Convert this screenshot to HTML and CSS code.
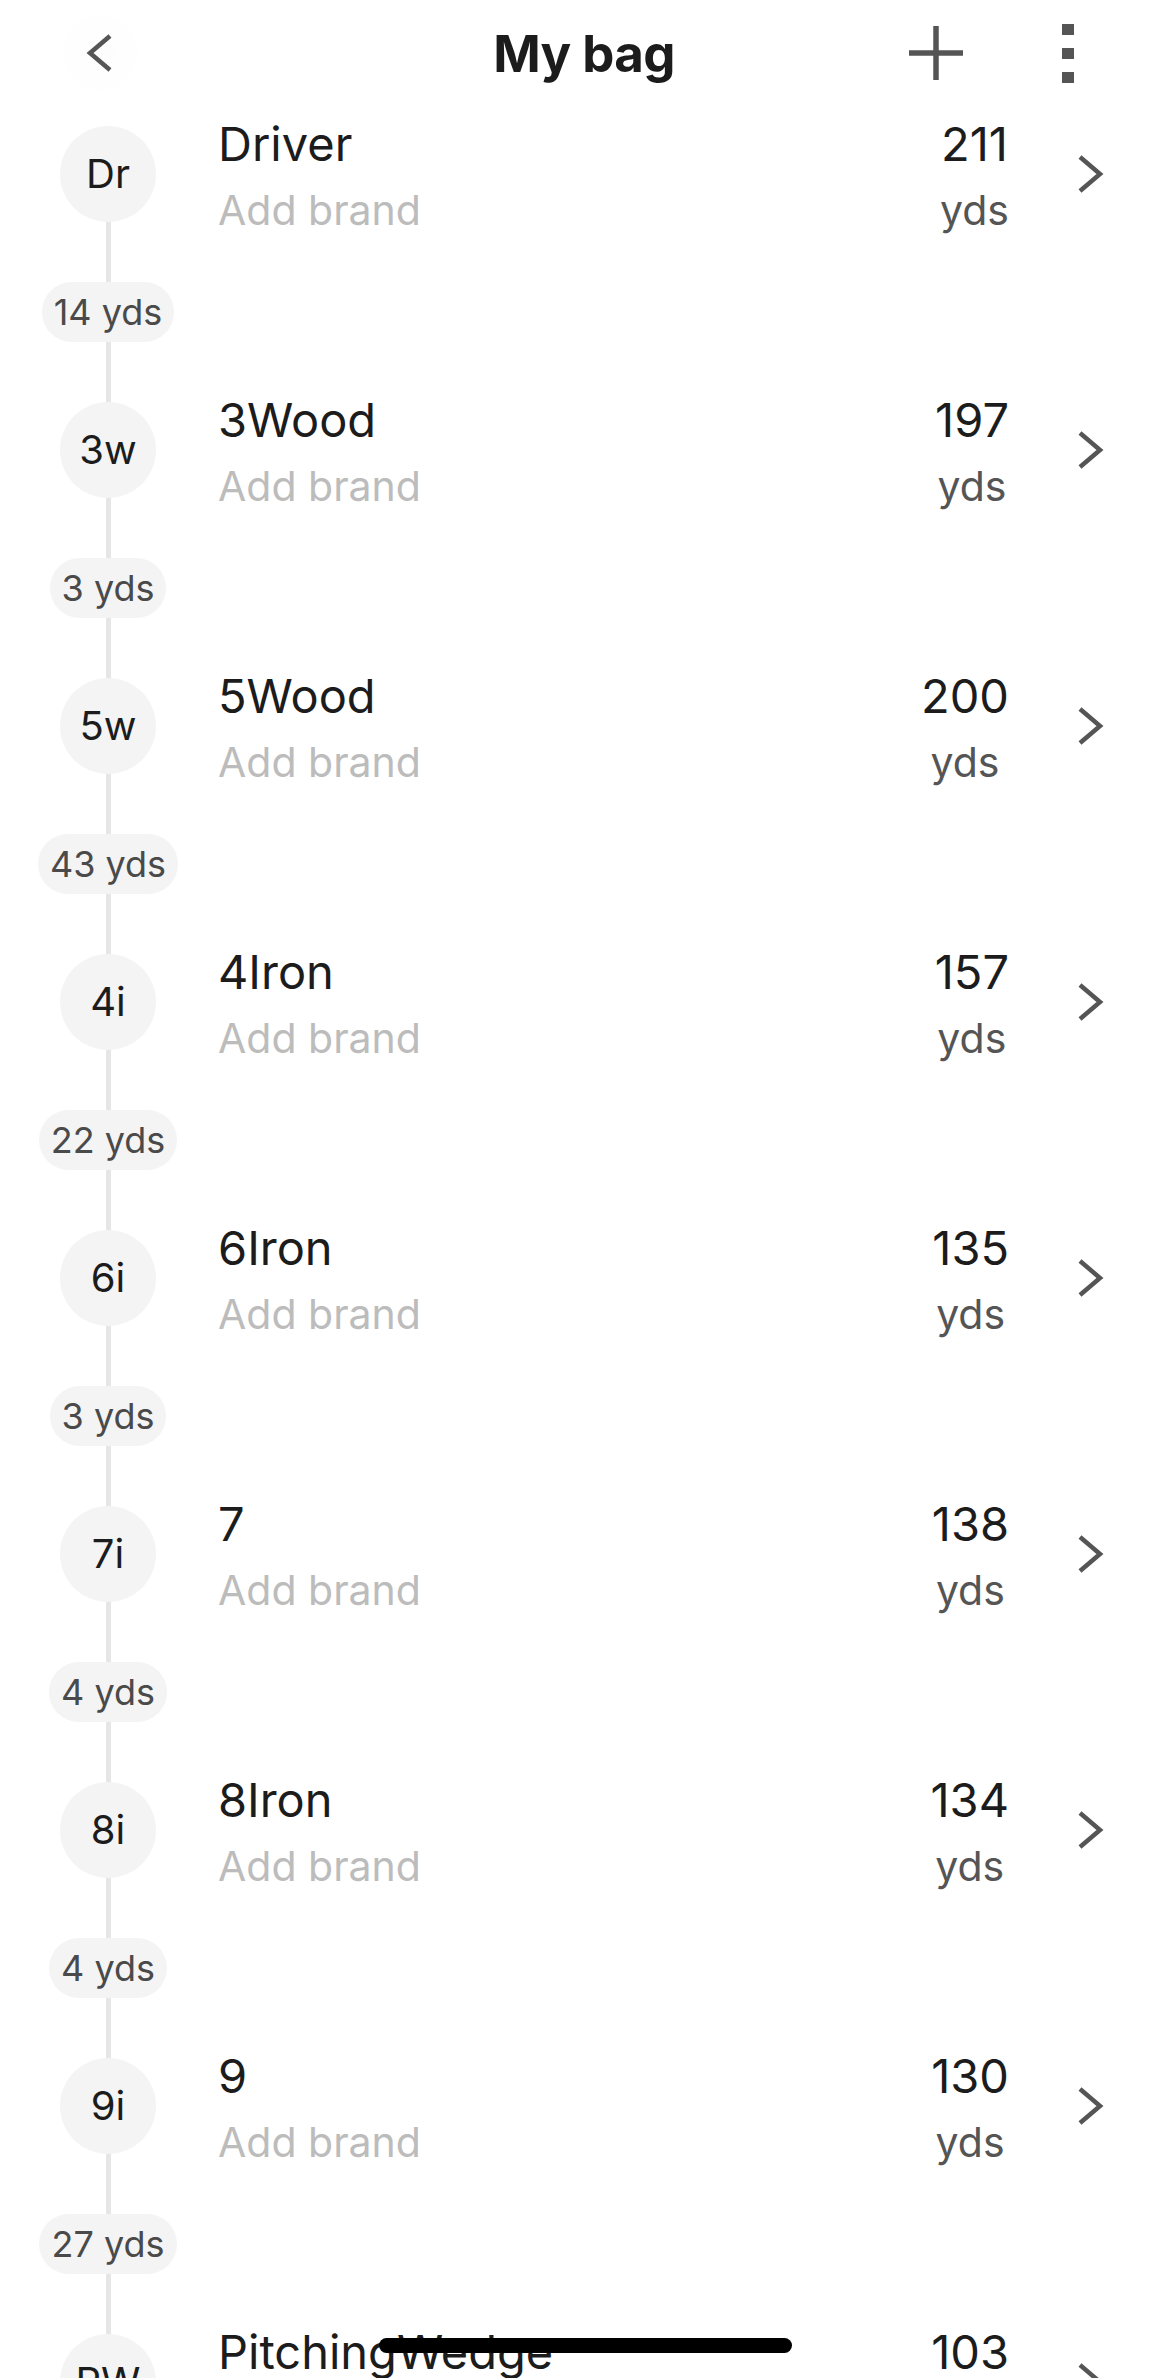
FILE: index.html
```html
<!DOCTYPE html>
<html lang="en">
<head>
<meta charset="utf-8">
<title>My bag</title>
<link rel="stylesheet" href="styles.css">
</head>
<body>
<div class="screen">
  <header class="topbar">
    <div class="bar-left">
      <button class="icon-btn glass" aria-label="Back">
        <svg width="30" height="40" viewBox="0 0 30 40"><path d="M25 3 L5 20 L25 37" fill="none" stroke="#555" stroke-width="4.5"/></svg>
      </button>
    </div>
    <h1 class="title">My bag</h1>
    <div class="bar-right">
      <button class="icon-btn" aria-label="Add">
        <svg width="56" height="56" viewBox="0 0 56 56"><path d="M28 1 V55 M1 28 H55" fill="none" stroke="#555" stroke-width="5.5"/></svg>
      </button>
      <button class="icon-btn" aria-label="More">
        <span class="kebab"><i></i><i></i><i></i></span>
      </button>
    </div>
  </header>

  <main class="list">
    <div class="club">
      <div class="badge">Dr</div>
      <div class="info"><div class="name">Driver</div><div class="brand">Add brand</div></div>
      <div class="dist"><div class="num">211</div><div class="unit">yds</div></div>
      <svg class="chev" width="30" height="40" viewBox="0 0 30 40"><path d="M4 3 L24 20 L4 37" fill="none" stroke="#555" stroke-width="4.5"/></svg>
    </div>
    <div class="gap"><div class="rail"><span class="line"></span><span class="pill">14 yds</span><span class="line"></span></div></div>

    <div class="club">
      <div class="badge">3w</div>
      <div class="info"><div class="name">3Wood</div><div class="brand">Add brand</div></div>
      <div class="dist"><div class="num">197</div><div class="unit">yds</div></div>
      <svg class="chev" width="30" height="40" viewBox="0 0 30 40"><path d="M4 3 L24 20 L4 37" fill="none" stroke="#555" stroke-width="4.5"/></svg>
    </div>
    <div class="gap"><div class="rail"><span class="line"></span><span class="pill">3 yds</span><span class="line"></span></div></div>

    <div class="club">
      <div class="badge">5w</div>
      <div class="info"><div class="name">5Wood</div><div class="brand">Add brand</div></div>
      <div class="dist"><div class="num">200</div><div class="unit">yds</div></div>
      <svg class="chev" width="30" height="40" viewBox="0 0 30 40"><path d="M4 3 L24 20 L4 37" fill="none" stroke="#555" stroke-width="4.5"/></svg>
    </div>
    <div class="gap"><div class="rail"><span class="line"></span><span class="pill">43 yds</span><span class="line"></span></div></div>

    <div class="club">
      <div class="badge">4i</div>
      <div class="info"><div class="name">4Iron</div><div class="brand">Add brand</div></div>
      <div class="dist"><div class="num">157</div><div class="unit">yds</div></div>
      <svg class="chev" width="30" height="40" viewBox="0 0 30 40"><path d="M4 3 L24 20 L4 37" fill="none" stroke="#555" stroke-width="4.5"/></svg>
    </div>
    <div class="gap"><div class="rail"><span class="line"></span><span class="pill">22 yds</span><span class="line"></span></div></div>

    <div class="club">
      <div class="badge">6i</div>
      <div class="info"><div class="name">6Iron</div><div class="brand">Add brand</div></div>
      <div class="dist"><div class="num">135</div><div class="unit">yds</div></div>
      <svg class="chev" width="30" height="40" viewBox="0 0 30 40"><path d="M4 3 L24 20 L4 37" fill="none" stroke="#555" stroke-width="4.5"/></svg>
    </div>
    <div class="gap"><div class="rail"><span class="line"></span><span class="pill">3 yds</span><span class="line"></span></div></div>

    <div class="club">
      <div class="badge">7i</div>
      <div class="info"><div class="name">7</div><div class="brand">Add brand</div></div>
      <div class="dist"><div class="num">138</div><div class="unit">yds</div></div>
      <svg class="chev" width="30" height="40" viewBox="0 0 30 40"><path d="M4 3 L24 20 L4 37" fill="none" stroke="#555" stroke-width="4.5"/></svg>
    </div>
    <div class="gap"><div class="rail"><span class="line"></span><span class="pill">4 yds</span><span class="line"></span></div></div>

    <div class="club">
      <div class="badge">8i</div>
      <div class="info"><div class="name">8Iron</div><div class="brand">Add brand</div></div>
      <div class="dist"><div class="num">134</div><div class="unit">yds</div></div>
      <svg class="chev" width="30" height="40" viewBox="0 0 30 40"><path d="M4 3 L24 20 L4 37" fill="none" stroke="#555" stroke-width="4.5"/></svg>
    </div>
    <div class="gap"><div class="rail"><span class="line"></span><span class="pill">4 yds</span><span class="line"></span></div></div>

    <div class="club">
      <div class="badge">9i</div>
      <div class="info"><div class="name">9</div><div class="brand">Add brand</div></div>
      <div class="dist"><div class="num">130</div><div class="unit">yds</div></div>
      <svg class="chev" width="30" height="40" viewBox="0 0 30 40"><path d="M4 3 L24 20 L4 37" fill="none" stroke="#555" stroke-width="4.5"/></svg>
    </div>
    <div class="gap"><div class="rail"><span class="line"></span><span class="pill">27 yds</span><span class="line"></span></div></div>

    <div class="club">
      <div class="badge">PW</div>
      <div class="info"><div class="name">PitchingWedge</div><div class="brand">Add brand</div></div>
      <div class="dist"><div class="num">103</div><div class="unit">yds</div></div>
      <svg class="chev" width="30" height="40" viewBox="0 0 30 40"><path d="M4 3 L24 20 L4 37" fill="none" stroke="#555" stroke-width="4.5"/></svg>
    </div>
  </main>

  <div class="home-indicator"></div>
</div>
</body>
</html>
```

FILE: styles.css
```css
* { box-sizing: border-box; }

html, body {
  margin: 0;
  padding: 0;
  background: #ffffff;
}

body {
  font-family: Inter, "Noto Sans", "Liberation Sans", sans-serif;
  color: #1c1c1c;
}

.screen {
  position: relative;
  width: 1170px;
  height: 2378px;
  overflow: hidden;
}

/* ---------- top bar ---------- */
.topbar {
  height: 106px;
  display: grid;
  grid-template-columns: 1fr auto 1fr;
  align-items: center;
  padding: 0 62px 0 60px;
}

.bar-left { justify-self: start; }

.bar-right {
  justify-self: end;
  display: flex;
  align-items: center;
  gap: 52px;
}

.icon-btn {
  width: 80px;
  height: 80px;
  border: 0;
  padding: 0;
  background: transparent;
  display: flex;
  align-items: center;
  justify-content: center;
}

.glass {
  border-radius: 50%;
  background: radial-gradient(circle, rgba(0,0,0,0.008) 0%, rgba(0,0,0,0.005) 60%, rgba(0,0,0,0) 75%);
}

.title {
  margin: 0;
  font-size: 51px;
  line-height: 1;
  font-weight: 700;
  letter-spacing: -0.6px;
  color: #1c1c1c;
}

.kebab {
  display: flex;
  flex-direction: column;
  gap: 13px;
}

.kebab i {
  display: block;
  width: 12px;
  height: 11px;
  background: #555;
}

/* ---------- list ---------- */
.list {
  margin-top: 20px;
}

.club {
  height: 96px;
  display: flex;
  align-items: center;
  padding: 0 64px 0 60px;
}

.badge {
  flex: none;
  width: 96px;
  height: 96px;
  border-radius: 50%;
  background: #f4f4f4;
  display: flex;
  align-items: center;
  justify-content: center;
  font-size: 40px;
  line-height: 1;
  color: #1c1c1c;
}

.info {
  flex: 1;
  margin-left: 62px;
  min-width: 0;
}

.name {
  font-size: 47px;
  line-height: 73px;
  color: #1c1c1c;
  white-space: nowrap;
}

.brand {
  font-size: 41px;
  line-height: 61px;
  color: #bcbcbc;
}

.dist {
  display: flex;
  flex-direction: column;
  align-items: center;
}

.num {
  font-size: 47px;
  line-height: 73px;
  color: #1c1c1c;
}

.unit {
  font-size: 41px;
  line-height: 61px;
  color: #555;
}

.chev {
  flex: none;
  margin-left: 67px;
}

/* ---------- connector ---------- */
.gap {
  height: 180px;
  padding-left: 60px;
}

.rail {
  width: 96px;
  height: 100%;
  display: flex;
  flex-direction: column;
  align-items: center;
}

.line {
  flex: 1;
  width: 5px;
  background: #e6e6e6;
}

.pill {
  flex: none;
  height: 60px;
  padding: 0 12px;
  border-radius: 30px;
  background: #f4f4f4;
  font-size: 36px;
  line-height: 60px;
  color: #4a4a4a;
  white-space: nowrap;
}

/* ---------- home indicator ---------- */
.home-indicator {
  position: absolute;
  left: 50%;
  bottom: 25px;
  width: 413px;
  height: 15px;
  margin-left: -206px;
  border-radius: 8px;
  background: #000;
}
```
